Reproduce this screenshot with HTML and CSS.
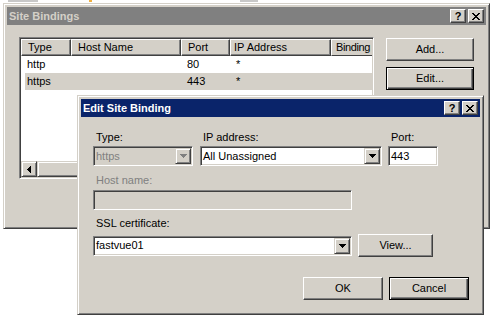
FILE: index.html
```html
<!DOCTYPE html>
<html>
<head>
<meta charset="utf-8">
<link rel="stylesheet" href="styles.css">
</head>
<body>
<div class="desk">
  <div class="streak s1"></div>
  <div class="streak s2"></div>
  <div class="dot"></div>

  <div class="win back">
    <div class="title inactive">
      <span class="ttext">Site Bindings</span>
      <span class="capbtns">
        <span class="capbtn"><span class="qm">?</span></span>
        <span class="capbtn"><svg width="8" height="7" viewBox="0 0 8 7" shape-rendering="crispEdges"><path d="M0 0h2v1H0zM6 0h2v1H6zM1 1h2v1H1zM5 1h2v1H5zM2 2h4v1H2zM3 3h2v1H3zM2 4h4v1H2zM1 5h2v1H1zM5 5h2v1H5zM0 6h2v1H0zM6 6h2v1H6z" fill="#000"/></svg></span>
      </span>
    </div>
    <div class="back-body">
      <div class="list">
        <div class="lv-head">
          <div class="hcell w1">Type</div>
          <div class="hcell w2">Host Name</div>
          <div class="hcell w3">Port</div>
          <div class="hcell w4 ip">IP Address</div>
          <div class="hcell w5">Binding</div>
        </div>
        <div class="lv-row">
          <span class="cell w1">http</span>
          <span class="cell w2"></span>
          <span class="cell w3">80</span>
          <span class="cell w4">*</span>
          <span class="cell w5"></span>
        </div>
        <div class="lv-row sel">
          <span class="cell w1">https</span>
          <span class="cell w2"></span>
          <span class="cell w3">443</span>
          <span class="cell w4">*</span>
          <span class="cell w5"></span>
        </div>
        <div class="lv-fill"></div>
        <div class="hscroll">
          <span class="sbtn"><svg width="4" height="7" viewBox="0 0 4 7" shape-rendering="crispEdges"><path d="M3 0h1v7H3zM2 1h1v5H2zM1 2h1v3H1zM0 3h1v1H0z" fill="#000"/></svg></span>
          <span class="thumb"></span>
          <span class="track"></span>
        </div>
      </div>
      <div class="btncol">
        <div class="btn wide">Add...</div>
        <div class="btn wide def">Edit...</div>
      </div>
    </div>
  </div>

  <div class="win front">
    <div class="title active">
      <span class="ttext">Edit Site Binding</span>
      <span class="capbtns">
        <span class="capbtn"><span class="qm">?</span></span>
        <span class="capbtn"><svg width="8" height="7" viewBox="0 0 8 7" shape-rendering="crispEdges"><path d="M0 0h2v1H0zM6 0h2v1H6zM1 1h2v1H1zM5 1h2v1H5zM2 2h4v1H2zM3 3h2v1H3zM2 4h4v1H2zM1 5h2v1H1zM5 5h2v1H5zM0 6h2v1H0zM6 6h2v1H6z" fill="#000"/></svg></span>
      </span>
    </div>
    <div class="front-body">
      <div class="row1">
        <div class="field f-type">
          <div class="lbl">Type:</div>
          <div class="combo disabled">
            <span class="cval">https</span>
            <span class="ddbtn"><svg width="7" height="4" viewBox="0 0 7 4" shape-rendering="crispEdges"><path d="M0 0h7v1H0zM1 1h5v1H1zM2 2h3v1H2zM3 3h1v1H3z" fill="#808080"/></svg></span>
          </div>
        </div>
        <div class="field f-ip">
          <div class="lbl">IP address:</div>
          <div class="combo">
            <span class="cval">All Unassigned</span>
            <span class="ddbtn"><svg width="7" height="4" viewBox="0 0 7 4" shape-rendering="crispEdges"><path d="M0 0h7v1H0zM1 1h5v1H1zM2 2h3v1H2zM3 3h1v1H3z" fill="#000"/></svg></span>
          </div>
        </div>
        <div class="field f-port">
          <div class="lbl">Port:</div>
          <div class="edit"><span class="cval">443</span></div>
        </div>
      </div>

      <div class="lbl dis host-lbl">Host name:</div>
      <div class="edit disabled host-edit"></div>

      <div class="lbl ssl-lbl">SSL certificate:</div>
      <div class="row3">
        <div class="combo ssl-combo">
          <span class="cval">fastvue01</span>
          <span class="ddbtn"><svg width="7" height="4" viewBox="0 0 7 4" shape-rendering="crispEdges"><path d="M0 0h7v1H0zM1 1h5v1H1zM2 2h3v1H2zM3 3h1v1H3z" fill="#000"/></svg></span>
        </div>
        <div class="btn view">View...</div>
      </div>

      <div class="row4">
        <div class="btn ok">OK</div>
        <div class="btn ok def">Cancel</div>
      </div>
    </div>
  </div>
</div>
</body>
</html>
```

FILE: styles.css
```css
* { box-sizing: border-box; }
html, body { margin: 0; padding: 0; }
body {
  background: #fff;
  font: 11px/13px "Liberation Sans", Arial, sans-serif;
  color: #000;
}
.desk { position: relative; width: 492px; height: 318px; overflow: hidden; background: #fff; }

.streak { position: absolute; top: 0; height: 2px; background: #c8c8c8; }
.s1 { left: 8px; width: 30px; }
.s2 { left: 240px; width: 18px; }
.dot { position: absolute; left: 89px; top: 0; width: 3px; height: 2px; background: #f0b040; }

.win {
  position: absolute;
  display: flex;
  flex-direction: column;
  background: #d4d0c8;
  border: 1px solid;
  border-color: #d4d0c8 #404040 #404040 #d4d0c8;
  box-shadow: inset 1px 1px #fff, inset -1px -1px #808080;
  padding: 3px;
}
.back { left: 3px; top: 3px; width: 487px; height: 226px; }
.front { left: 77px; top: 95px; width: 407px; height: 220px; }

.title {
  flex: none;
  height: 18px;
  display: flex;
  align-items: center;
  padding-left: 2px;
  font-weight: bold;
}
.title.inactive { background: #808080; color: #d4d0c8; }
.title.active { background: #0a246a; color: #fff; }
.ttext { flex: 1; }
.capbtns { display: flex; gap: 2px; margin-right: 2px; }
.capbtn {
  width: 16px;
  height: 14px;
  display: flex;
  align-items: center;
  justify-content: center;
  background: #d4d0c8;
  border: 1px solid;
  border-color: #fff #404040 #404040 #fff;
  box-shadow: inset -1px -1px #808080;
}
.qm { color: #000; font-weight: bold; font-size: 11px; line-height: 11px; margin-top: 1px; }

/* back dialog */
.back-body { display: flex; gap: 12px; padding: 12px 0 0 12px; }
.list {
  flex: none;
  width: 355px;
  height: 142px;
  display: flex;
  flex-direction: column;
  background: #fff;
  border: 1px solid;
  border-color: #808080 #fff #fff #808080;
  box-shadow: inset 1px 1px #404040, inset -1px -1px #d4d0c8;
  padding: 1px;
  overflow: hidden;
}
.lv-head { display: flex; height: 17px; flex: none; overflow: hidden; }
.hcell {
  flex: none;
  height: 17px;
  padding: 1px 0 0 6px;
  background: #d4d0c8;
  border: 1px solid;
  border-color: #fff #404040 #404040 #fff;
  box-shadow: inset -1px -1px #808080;
  white-space: nowrap;
  overflow: hidden;
}
.hcell.ip { padding-left: 3px; }
.hcell.w5 { flex: 1; border-right: 0; box-shadow: none; padding-left: 4px; letter-spacing: -0.4px; }
.w1 { width: 50px; }
.w2 { width: 110px; }
.w3 { width: 49px; }
.w4 { width: 101px; }
.w5 { width: 41px; }
.lv-row { display: flex; height: 17px; flex: none; align-items: center; overflow: hidden; }
.lv-row .cell { flex: none; padding-left: 6px; white-space: nowrap; }
.lv-row.sel { background: linear-gradient(to right, #fff 4px, #d4d0c8 4px); }
.lv-fill { flex: 1; }
.hscroll { display: flex; height: 16px; flex: none; }
.sbtn {
  width: 16px;
  height: 16px;
  display: flex;
  align-items: center;
  justify-content: center;
  background: #d4d0c8;
  border: 1px solid;
  border-color: #d4d0c8 #404040 #404040 #d4d0c8;
  box-shadow: inset 1px 1px #fff, inset -1px -1px #808080;
}
.thumb {
  width: 160px;
  height: 16px;
  background: #d4d0c8;
  border: 1px solid;
  border-color: #d4d0c8 #404040 #404040 #d4d0c8;
  box-shadow: inset 1px 1px #fff, inset -1px -1px #808080;
}
.track { flex: 1; background: #e8e6e2; }

.btncol { display: flex; flex-direction: column; gap: 6px; padding-top: 1px; }
.btn {
  height: 23px;
  display: flex;
  align-items: center;
  justify-content: center;
  background: #d4d0c8;
  border: 1px solid;
  border-color: #fff #404040 #404040 #fff;
  box-shadow: inset -1px -1px #808080;
  padding-bottom: 1px;
}
.btn.def {
  border-color: #000;
  box-shadow: inset 1px 1px #fff, inset -1px -1px #404040, inset -2px -2px #808080;
}
.btn.wide { width: 88px; }

/* front dialog */
.front-body { display: flex; flex-direction: column; padding: 14px 0 0 12px; }
.row1 { display: flex; }
.field { display: flex; flex-direction: column; gap: 2px; }
.f-type { width: 100px; }
.f-ip { width: 182px; margin-left: 7px; }
.f-port { width: 50px; margin-left: 6px; }
.lbl { padding-left: 3px; white-space: nowrap; }
.lbl.dis { color: #808080; }

.combo, .edit {
  display: flex;
  align-items: center;
  height: 20px;
  background: #fff;
  border: 1px solid;
  border-color: #808080 #fff #fff #808080;
  box-shadow: inset 1px 1px #404040, inset -1px -1px #d4d0c8;
  padding: 1px;
}
.combo.disabled, .edit.disabled { background: #d4d0c8; }
.combo.disabled .cval { color: #808080; }
.cval { flex: 1; padding-left: 1px; white-space: nowrap; overflow: hidden; }
.ddbtn {
  width: 16px;
  height: 16px;
  flex: none;
  display: flex;
  align-items: center;
  justify-content: center;
  background: #d4d0c8;
  border: 1px solid;
  border-color: #d4d0c8 #404040 #404040 #d4d0c8;
  box-shadow: inset 1px 1px #fff, inset -1px -1px #808080;
}

.host-lbl { margin-top: 8px; }
.host-edit { width: 259px; margin-top: 3px; }
.ssl-lbl { margin-top: 7px; }
.row3 { display: flex; align-items: center; margin-top: 4px; }
.ssl-combo { width: 259px; }
.view { width: 75px; margin-left: 6px; }
.row4 { display: flex; margin-top: 20px; padding-left: 210px; gap: 6px; }
.btn.ok { width: 80px; }
```
